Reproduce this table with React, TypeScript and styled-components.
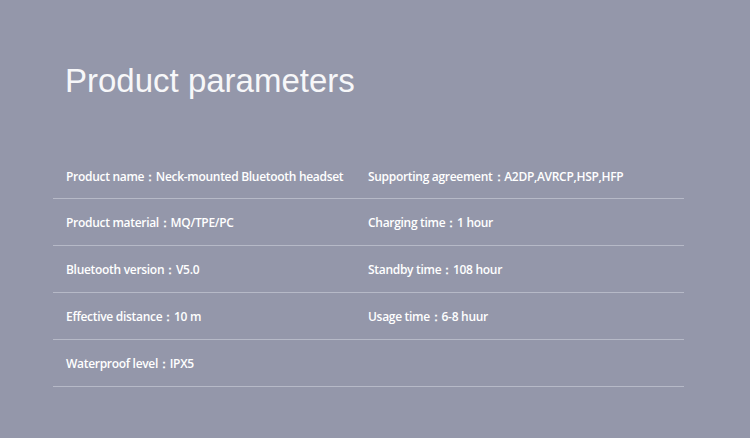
import { createGlobalStyle, styled } from "styled-components";

const GlobalStyle = createGlobalStyle`
  html, body {
    margin: 0;
    padding: 0;
    background: #9497aa;
  }
`;

const rows: [string, string][] = [
  ["Product name：Neck-mounted Bluetooth headset", "Supporting agreement：A2DP,AVRCP,HSP,HFP"],
  ["Product material：MQ/TPE/PC", "Charging time：1 hour"],
  ["Bluetooth version：V5.0", "Standby time：108 hour"],
  ["Effective distance：10 m", "Usage time：6-8 huur"],
  ["Waterproof level：IPX5", ""],
];

const App = () => {
  return (
    <>
      <GlobalStyle />
      <Page>
        <Title>Product parameters</Title>
        <Table>
          {rows.map(([left, right], i) => (
            <Row key={i} $first={i === 0}>
              <Cell>{left}</Cell>
              <Cell>{right}</Cell>
            </Row>
          ))}
        </Table>
      </Page>
    </>
  );
};

export default App;

const Page = styled.div`
  width: 750px;
  height: 438px;
  background: #9497aa;
  padding: 60px 0 0 53px;
  box-sizing: border-box;
`;

const Title = styled.h1`
  margin: 0 0 0 12px;
  font-family: "Liberation Sans", Arial, sans-serif;
  font-weight: 400;
  font-size: 33px;
  line-height: 42px;
  color: #f7f7f9;
`;

const Table = styled.div`
  width: 631px;
  margin-top: 51px;
`;

const Row = styled.div<{ $first?: boolean }>`
  display: grid;
  grid-template-columns: 302px 1fr;
  height: ${({ $first }) => ($first ? "46px" : "47px")};
  align-items: center;
  border-bottom: 1px solid #b6b9c7;
  box-sizing: border-box;
`;

const Cell = styled.div`
  padding: 2px 0 0 13px;
  font-family: "Open Sans", sans-serif;
  font-weight: 600;
  font-size: 12px;
  letter-spacing: -0.3px;
  color: #ffffff;
  white-space: nowrap;
`;
